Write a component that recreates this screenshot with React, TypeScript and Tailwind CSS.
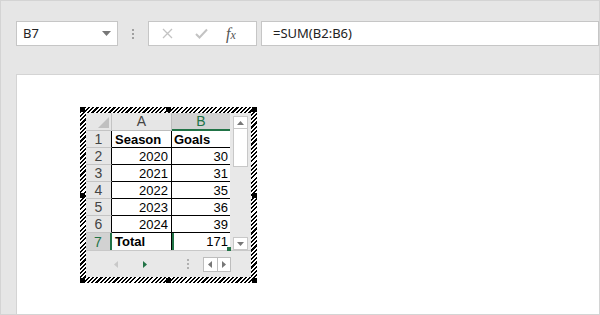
import React from 'react'

const rows = [
  { n: 1, a: 'Season', b: 'Goals', bold: true },
  { n: 2, a: '2020', b: '30' },
  { n: 3, a: '2021', b: '31' },
  { n: 4, a: '2022', b: '35' },
  { n: 5, a: '2023', b: '36' },
  { n: 6, a: '2024', b: '39' },
  { n: 7, a: 'Total', b: '171', total: true },
]

function Handle({ className }: { className: string }) {
  return <div className={`absolute w-[5px] h-[5px] bg-black ${className}`} />
}

export default function App() {
  return (
    <div
      className="w-[600px] h-[315px] bg-[#e6e6e6] border border-[#d4d4d4] flex flex-col overflow-hidden"
      style={{ fontFamily: '"Noto Sans", "Open Sans", sans-serif' }}
    >
      {/* Formula toolbar */}
      <div className="flex items-center mt-[20px] ml-[15px] h-[25px]">
        <div className="w-[102px] h-[25px] bg-white border border-[#c6c6c6] flex items-center pl-[6px] pr-[6px]">
          <span className="text-[13px] text-[#222] flex-1 leading-none">B7</span>
          <svg width="9" height="5" viewBox="0 0 9 5">
            <path d="M0 0 L9 0 L4.5 5Z" fill="#777" />
          </svg>
        </div>
        <div className="w-[30px] flex flex-col items-center gap-[2px]">
          <div className="w-[2px] h-[2px] bg-[#a0a0a0]" />
          <div className="w-[2px] h-[2px] bg-[#a0a0a0]" />
          <div className="w-[2px] h-[2px] bg-[#a0a0a0]" />
        </div>
        <div className="w-[109px] h-[25px] bg-white border border-[#c6c6c6] flex items-center">
          <svg width="11" height="11" viewBox="0 0 11 11" className="ml-[13px]">
            <path d="M1 1 L10 10 M10 1 L1 10" stroke="#c3c3c3" strokeWidth="1.3" />
          </svg>
          <svg width="13" height="11" viewBox="0 0 13 11" className="ml-[22px]">
            <path d="M1 6 L4.5 9.5 L12 1.5" stroke="#c3c3c3" strokeWidth="2" fill="none" />
          </svg>
          <span
            className="ml-[18px] text-[16px] italic text-[#555] leading-none"
            style={{ fontFamily: '"Liberation Serif", serif' }}
          >
            f<span className="text-[12px]">x</span>
          </span>
        </div>
        <div className="flex-1 h-[25px] ml-[4px] bg-white border border-[#c6c6c6] flex items-center pl-[11px]">
          <span className="text-[13px] text-[#222] leading-none">=SUM(B2:B6)</span>
        </div>
      </div>

      {/* Sheet */}
      <div className="flex-1 mt-[28px] ml-[15px] bg-white border-t border-l border-[#d4d4d4]">
        <div className="ml-[63px] mt-[32px] relative w-[177px] h-[176px] p-[6px] bg-[repeating-linear-gradient(135deg,#000_0px,#000_1.5px,#fff_1.5px,#fff_3px)]">
          <Handle className="left-0 top-0" />
          <Handle className="right-0 top-0" />
          <Handle className="left-0 bottom-0" />
          <Handle className="right-0 bottom-0" />
          <Handle className="left-[86px] top-0" />
          <Handle className="left-[86px] bottom-0" />
          <Handle className="left-0 top-[86px]" />
          <Handle className="right-0 top-[86px]" />

          <div
            className="w-[165px] h-[164px] bg-[#e8e8e8] flex flex-col"
            style={{ fontFamily: '"Liberation Sans", Arial, sans-serif' }}
          >
            <div className="flex">
              {/* grid */}
              <div className="w-[144px] flex flex-col">
                <div className="flex h-[18px]">
                  <div className="w-[26px] h-full bg-[#e6e6e6] border-r border-b border-[#c4c4c4] flex items-end justify-end p-[2px]">
                    <svg width="11" height="11" viewBox="0 0 11 11">
                      <path d="M11 0 L11 11 L0 11Z" fill="#c0c0c0" />
                    </svg>
                  </div>
                  <div className="w-[60px] h-full bg-[#e6e6e6] border-r border-b border-[#bdbdbd] flex items-center justify-center text-[14px] text-[#444]">
                    A
                  </div>
                  <div className="w-[58px] h-full bg-[#d2d2d2] border-b-2 border-[#217346] flex items-center justify-center text-[14px] text-[#217346]">
                    B
                  </div>
                </div>
                {rows.map(r => (
                  <div key={r.n} className="flex h-[17px] text-[13px] leading-none">
                    <div
                      className={
                        r.total
                          ? 'w-[26px] h-full bg-[#d2d2d2] border-r-2 border-r-[#217346] flex items-center justify-center text-[14px] text-[#217346]'
                          : 'w-[26px] h-full bg-[#e6e6e6] border-r border-b border-r-black border-b-[#c4c4c4] flex items-center justify-center text-[14px] text-[#444]'
                      }
                    >
                      {r.n}
                    </div>
                    <div
                      className={`w-[60px] h-full bg-white border-r border-black flex items-center px-[3px] text-black ${
                        r.total ? '' : 'border-b'
                      } ${r.bold || r.total ? 'font-bold justify-start' : 'justify-end'}`}
                    >
                      {r.a}
                    </div>
                    <div
                      className={`relative w-[58px] h-full bg-white flex items-center px-[2px] text-black ${
                        r.total ? 'border-l-2 border-[#217346] justify-end' : 'border-b border-black'
                      } ${r.bold ? 'font-bold justify-start' : 'justify-end'}`}
                    >
                      {r.b}
                      {r.total && (
                        <div className="absolute right-[-1px] bottom-[-1px] w-[4px] h-[4px] bg-[#217346]" />
                      )}
                    </div>
                  </div>
                ))}
              </div>

              {/* vertical scrollbar */}
              <div className="w-[21px] flex flex-col pl-[3px] pt-[3px]">
                <div className="w-[15px] flex-1 flex flex-col">
                  <div className="h-[13px] bg-white border border-[#c8c8c8] flex items-center justify-center">
                    <svg width="7" height="4" viewBox="0 0 7 4">
                      <path d="M0 4 L7 4 L3.5 0Z" fill="#777" />
                    </svg>
                  </div>
                  <div className="h-[38px] bg-white border border-t-0 border-[#c8c8c8]" />
                  <div className="flex-1" />
                  <div className="h-[13px] bg-white border border-[#c8c8c8] flex items-center justify-center">
                    <svg width="7" height="4" viewBox="0 0 7 4">
                      <path d="M0 0 L7 0 L3.5 4Z" fill="#777" />
                    </svg>
                  </div>
                </div>
              </div>
            </div>

            {/* sheet tabs bar */}
            <div className="flex-1 flex items-center border-t border-[#c8c8c8]">
              <svg width="4" height="7" viewBox="0 0 4 7" className="ml-[28px]">
                <path d="M4 0 L4 7 L0 3.5Z" fill="#c8c8c8" />
              </svg>
              <svg width="4" height="7" viewBox="0 0 4 7" className="ml-[25px]">
                <path d="M0 0 L0 7 L4 3.5Z" fill="#217346" />
              </svg>
              <div className="ml-[40px] flex flex-col gap-[2px]">
                <div className="w-[2px] h-[2px] bg-[#b0b0b0]" />
                <div className="w-[2px] h-[2px] bg-[#b0b0b0]" />
                <div className="w-[2px] h-[2px] bg-[#b0b0b0]" />
              </div>
              <div className="ml-[14px] w-[28px] h-[15px] flex border border-[#bdbdbd] bg-white">
                <div className="flex-1 flex items-center justify-center border-r border-[#bdbdbd]">
                  <svg width="4" height="7" viewBox="0 0 4 7">
                    <path d="M4 0 L4 7 L0 3.5Z" fill="#777" />
                  </svg>
                </div>
                <div className="flex-1 flex items-center justify-center">
                  <svg width="4" height="7" viewBox="0 0 4 7">
                    <path d="M0 0 L0 7 L4 3.5Z" fill="#777" />
                  </svg>
                </div>
              </div>
            </div>
          </div>
        </div>
      </div>
    </div>
  )
}
